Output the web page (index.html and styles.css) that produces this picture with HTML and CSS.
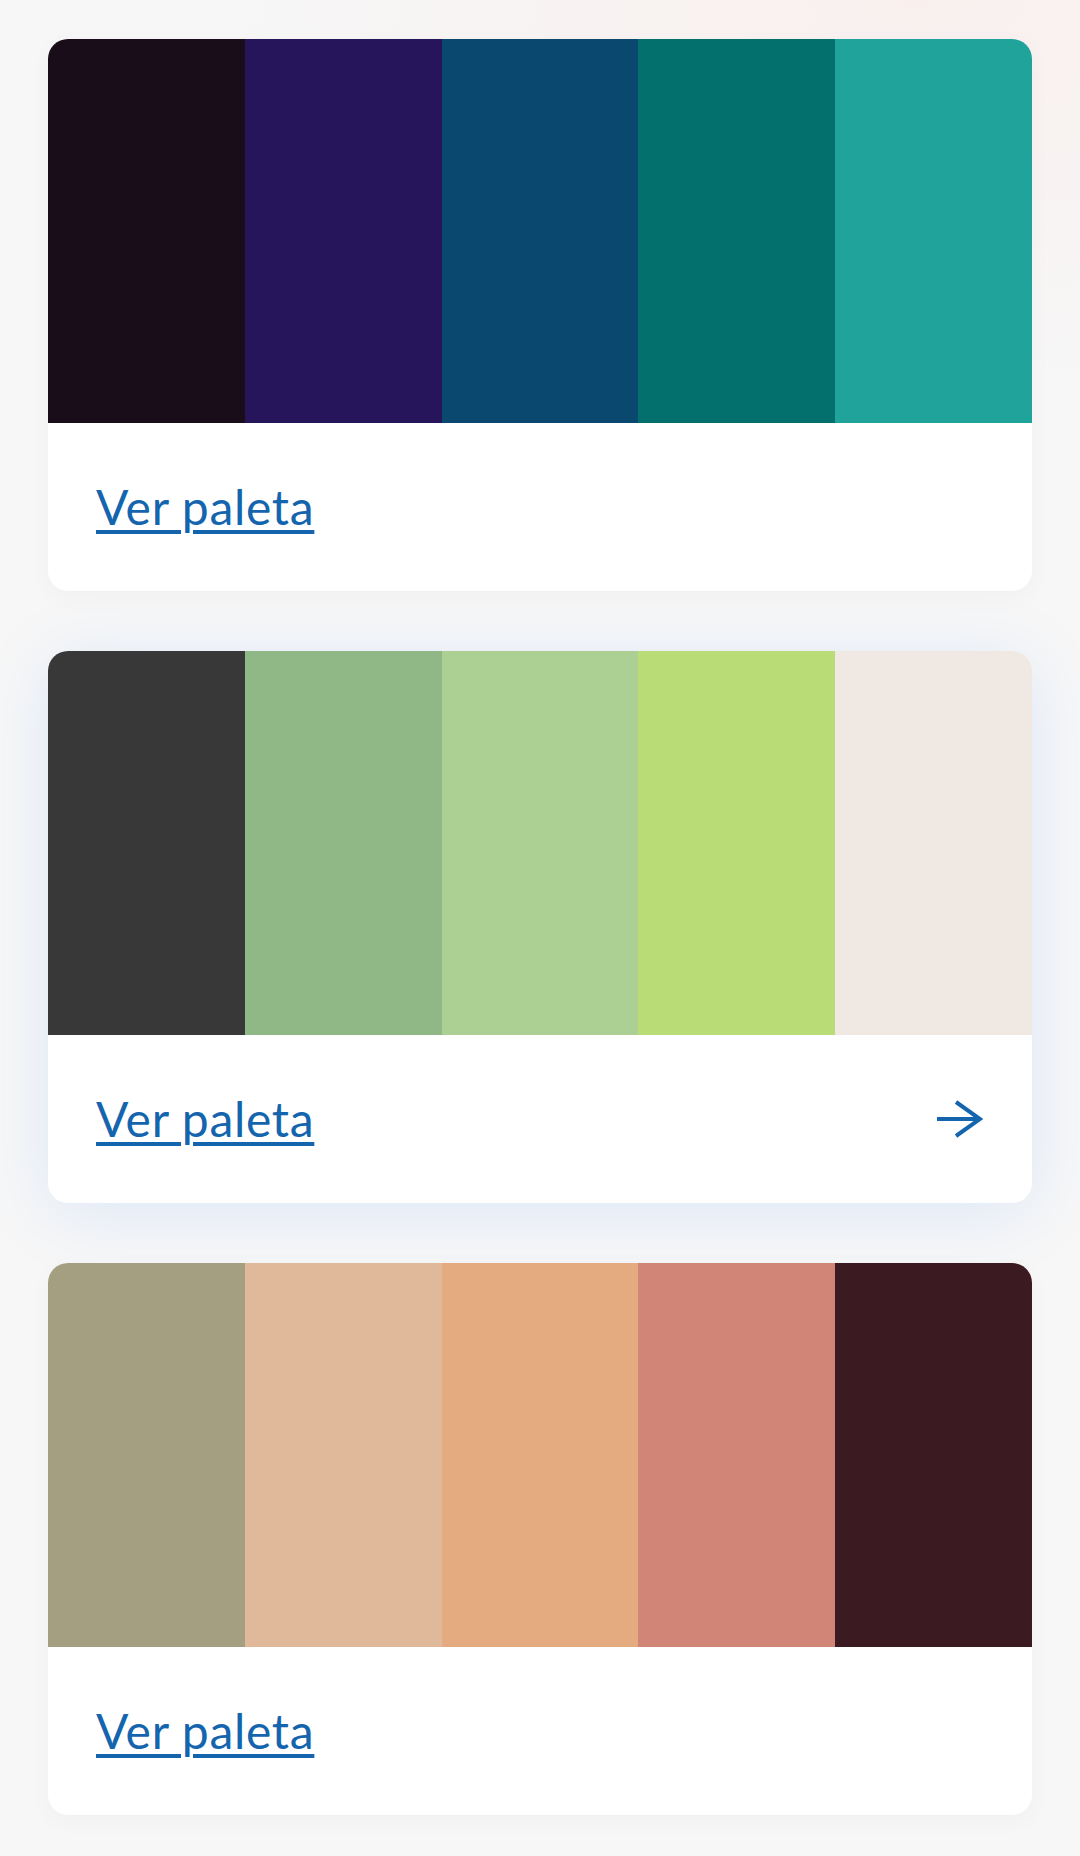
FILE: index.html
```html
<!DOCTYPE html>
<html lang="es">
<head>
<meta charset="utf-8">
<title>Paletas</title>
<link rel="stylesheet" href="styles.css">
</head>
<body>
<main class="list">
  <article class="card">
    <div class="swatches">
      <div class="sw" style="background:#190d19"></div>
      <div class="sw" style="background:#26155b"></div>
      <div class="sw" style="background:#0b4870"></div>
      <div class="sw" style="background:#03706e"></div>
      <div class="sw" style="background:#1fa39b"></div>
    </div>
    <div class="foot"><a class="link" href="#">Ver paleta</a></div>
  </article>
  <article class="card card-hover">
    <div class="swatches">
      <div class="sw" style="background:#383838"></div>
      <div class="sw" style="background:#8fb886"></div>
      <div class="sw" style="background:#acd094"></div>
      <div class="sw" style="background:#b9dc77"></div>
      <div class="sw" style="background:#efe8e3"></div>
    </div>
    <div class="foot"><a class="link" href="#">Ver paleta</a>
      <svg class="arrow" width="46" height="38" viewBox="0 0 46 38" fill="none" stroke="currentColor" stroke-width="4" stroke-linecap="butt" stroke-linejoin="miter"><path d="M0 19H43"/><path d="M19 2L43 19L19 36"/></svg>
    </div>
  </article>
  <article class="card">
    <div class="swatches">
      <div class="sw" style="background:#a49f81"></div>
      <div class="sw" style="background:#e0b89a"></div>
      <div class="sw" style="background:#e4aa80"></div>
      <div class="sw" style="background:#d08576"></div>
      <div class="sw" style="background:#3c1a21"></div>
    </div>
    <div class="foot"><a class="link" href="#">Ver paleta</a></div>
  </article>
</main>
</body>
</html>
```
FILE: styles.css
```css
html, body { margin: 0; padding: 0; }
body {
  min-height: 1856px;
  background:
    radial-gradient(ellipse 700px 400px at 85% 0%, #f9f0ee 0%, rgba(249,240,238,0) 100%),
    #f7f7f7;
  font-family: Lato, "Noto Sans", sans-serif;
}
.list {
  display: flex;
  flex-direction: column;
  gap: 60px;
  padding: 39px 48px 0 48px;
}
.card {
  background: #fff;
  border-radius: 20px;
  overflow: hidden;
  box-shadow: 0 6px 24px rgba(0,0,0,0.03);
}
.card-hover {
  box-shadow: 0 10px 70px rgba(50,130,245,0.13);
}
.swatches {
  display: grid;
  grid-template-columns: repeat(5, 1fr);
  height: 384px;
}
.foot {
  height: 168px;
  padding: 0 49px 0 48px;
  display: flex;
  align-items: center;
  justify-content: space-between;
  box-sizing: border-box;
}
.link {
  color: #1565ae;
  font-size: 48px;
  line-height: 1;
  text-decoration: underline;
  text-decoration-thickness: 4px;
  text-underline-offset: 5px;
  letter-spacing: 0.7px;
}
.arrow { color: #1565ae; display: block; }
```
